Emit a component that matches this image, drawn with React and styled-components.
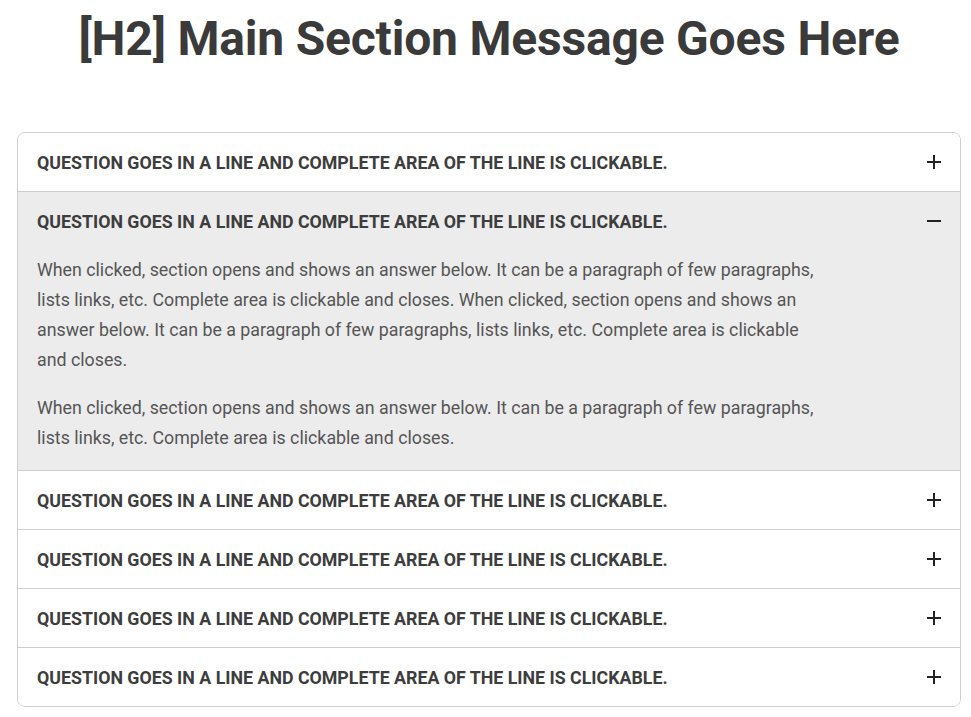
import styled, { createGlobalStyle } from "styled-components";

const GlobalStyle = createGlobalStyle`
    body {
        margin: 0;
        background: #fff;
        font-family: Roboto, "Liberation Sans", Arial, sans-serif;
    }
`;

const questions = [
    { open: false },
    { open: true },
    { open: false },
    { open: false },
    { open: false },
    { open: false },
];

const QUESTION = "Question goes in a line and complete area of the line is clickable.";

function PlusIcon ({ open }) {
    return (
        <svg width="16" height="16" viewBox="0 0 16 16">
            <path d="M1 8h14" stroke="#222" strokeWidth="2" />
            {!open && <path d="M8 1v14" stroke="#222" strokeWidth="2" />}
        </svg>
    );
}

function App () {
    return (
        <>
            <GlobalStyle />
            <Page>
                <Title>[H2] Main Section Message Goes Here</Title>
                <Accordion>
                    {questions.map((q, i) => (
                        <Item key={i} open={q.open}>
                            <Header>
                                <Question>{QUESTION}</Question>
                                <PlusIcon open={q.open} />
                            </Header>
                            {q.open && (
                                <Answer>
                                    <p>
                                        When clicked, section opens and shows an answer below. It can be a paragraph of few paragraphs,
                                        lists links, etc. Complete area is clickable and closes. When clicked, section opens and shows an
                                        answer below. It can be a paragraph of few paragraphs, lists links, etc. Complete area is clickable
                                        and closes.
                                    </p>
                                    <p>
                                        When clicked, section opens and shows an answer below. It can be a paragraph of few paragraphs,
                                        lists links, etc. Complete area is clickable and closes.
                                    </p>
                                </Answer>
                            )}
                        </Item>
                    ))}
                </Accordion>
            </Page>
        </>
    );
}

const Page = styled.div`
    padding: 11px 10px 10px 17px;
`;

const Title = styled.h2`
    margin: 0 0 66px;
    text-align: center;
    font-size: 48px;
    line-height: 55px;
    font-weight: 700;
    color: #3a3a3a;
    letter-spacing: -0.2px;
`;

const Accordion = styled.div`
    border: 1px solid #cfcfcf;
    border-radius: 8px;
    overflow: hidden;
`;

const Item = styled.div`
    background: ${(p) => (p.open ? "#ececec" : "#fff")};

    & + & {
        border-top: 1px solid #cfcfcf;
    }
`;

const Header = styled.div`
    height: 58px;
    display: flex;
    align-items: center;
    justify-content: space-between;
    padding: 0 18px 0 19px;
    cursor: pointer;
`;

const Question = styled.span`
    font-size: 17.8px;
    font-weight: 700;
    text-transform: uppercase;
    color: #3d3d3d;
`;

const Answer = styled.div`
    padding: 5px 19px 17px;
    max-width: 790px;

    p {
        margin: 0 0 18px;
        font-size: 17.8px;
        line-height: 30px;
        color: #555;
    }

    p:last-child {
        margin-bottom: 0;
    }
`;

export default App;
